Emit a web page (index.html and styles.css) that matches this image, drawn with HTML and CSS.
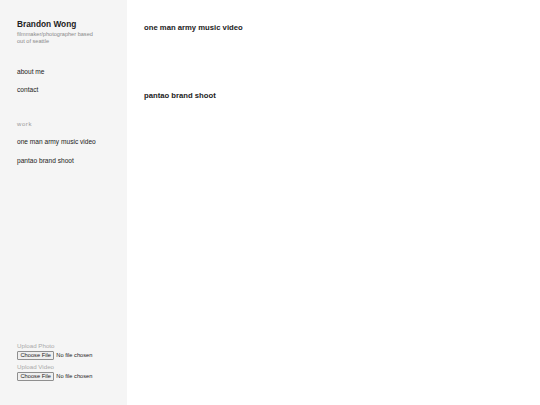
FILE: index.html
```html
<!DOCTYPE html>
<html>
<head>
<meta charset="utf-8">
<link rel="stylesheet" href="styles.css">
</head>
<body>
<div class="layout">
  <aside class="sidebar">
    <div class="brand">
      <h1 class="name">Brandon Wong</h1>
      <p class="tagline">filmmaker/photographer based<br>out of seattle</p>
    </div>
    <nav class="nav">
      <a class="nav-link" href="#">about me</a>
      <a class="nav-link" href="#">contact</a>
    </nav>
    <div class="section-label">work</div>
    <nav class="nav">
      <a class="nav-link" href="#">one man army music video</a>
      <a class="nav-link" href="#">pantao brand shoot</a>
    </nav>
    <div class="uploads">
      <label class="upload-label">Upload Photo</label>
      <input class="upload-input" type="file">
      <label class="upload-label">Upload Video</label>
      <input class="upload-input" type="file">
    </div>
  </aside>
  <main class="content">
    <h2 class="project-title">one man army music video</h2>
    <h2 class="project-title second">pantao brand shoot</h2>
  </main>
</div>
</body>
</html>
```
FILE: styles.css
```css
html, body {
  margin: 0;
  padding: 0;
  height: 100%;
}
body {
  font-family: "Liberation Sans", Arial, sans-serif;
  color: #222;
  background: #fff;
}
.layout {
  display: flex;
  height: 405px;
}
.sidebar {
  width: 127px;
  flex: none;
  background: #f5f5f5;
  box-sizing: border-box;
  padding: 19px 0 0 17px;
  display: flex;
  flex-direction: column;
}
.name {
  margin: 0;
  font-size: 8.3px;
  font-weight: bold;
  line-height: 10px;
  color: #222;
}
.tagline {
  margin: 2px 0 0 0;
  font-size: 5.6px;
  line-height: 6.5px;
  color: #8a8a8a;
}
.nav {
  display: flex;
  flex-direction: column;
}
.brand + .nav {
  margin-top: 24px;
}
.nav-link {
  font-size: 6.6px;
  line-height: 8px;
  color: #222;
  text-decoration: none;
  margin-bottom: 10px;
}
.section-label + .nav .nav-link {
  margin-bottom: 10.5px;
}
.section-label {
  margin-top: 16px;
  margin-bottom: 10px;
  font-size: 6px;
  line-height: 8px;
  letter-spacing: 0.6px;
  color: #999;
}
.uploads {
  margin-top: auto;
  margin-bottom: 21px;
  display: flex;
  flex-direction: column;
  align-items: flex-start;
}
.upload-label {
  font-size: 6.2px;
  line-height: 8px;
  color: #aaa;
}
.upload-input {
  font-family: "Liberation Sans", Arial, sans-serif;
  font-size: 5.7px;
  margin: 0.5px 0 3.5px 0;
  color: #222;
}
.upload-input::file-selector-button {
  font: inherit;
  color: #222;
  background: #efefef;
  border: 1px solid #8f8f8f;
  border-radius: 1px;
  padding: 0 2.5px;
  height: 9px;
  line-height: 7px;
  margin: 0 2px 0 0;
}
.content {
  flex: 1;
  padding: 23px 0 0 17px;
}
.project-title {
  margin: 0;
  font-size: 7.7px;
  line-height: 10px;
  font-weight: bold;
  color: #222;
}
.project-title.second {
  margin-top: 58px;
}
```
